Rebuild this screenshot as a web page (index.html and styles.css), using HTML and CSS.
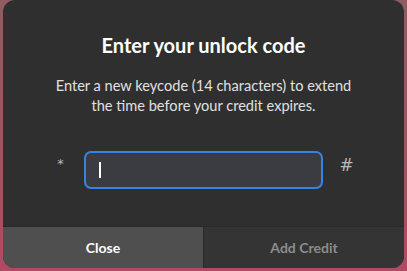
FILE: index.html
```html
<!DOCTYPE html>
<html lang="en">
<head>
    <meta charset="UTF-8">
    <meta name="viewport" content="width=device-width, initial-scale=1.0">
    <title>Enter your unlock code</title>
    <link rel="stylesheet" href="styles.css">
</head>
<body>
    <div class="dialog">
        <div class="content">
            <h1>Enter your unlock code</h1>
            <p class="message">Enter a new keycode (14 characters) to extend the time before your credit expires.</p>

            <div class="code-row">
                <span class="key key-star">*</span>
                <div class="code-input">
                    <span class="caret"></span>
                </div>
                <span class="key key-hash">#</span>
            </div>
        </div>

        <div class="buttons">
            <button class="btn btn-close">Close</button>
            <button class="btn btn-add" disabled>Add Credit</button>
        </div>
    </div>
</body>
</html>
```

FILE: styles.css
```css
html, body {
    height: 100%;
}
body {
    margin: 0;
    font-family: Lato, 'Open Sans', sans-serif;
    background: linear-gradient(180deg, #8e5c62 0%, #a0545e 70%, #b14a63 100%);
    overflow: hidden;
}
.dialog {
    margin: 0 3px;
    height: 268px;
    background-color: #2f2f2f;
    border-radius: 12px;
    overflow: hidden;
    display: flex;
    flex-direction: column;
    color: #ffffff;
}
.content {
    flex: 1;
    padding: 33px 45px 0;
    text-align: center;
}
h1 {
    margin: 0;
    font-size: 20px;
    font-weight: 700;
    line-height: 24px;
}
.message {
    margin: 19px 0 0;
    font-size: 14.6px;
    line-height: 20px;
    color: #e0e0e0;
}
.code-row {
    margin-top: 35px;
    display: flex;
    align-items: flex-start;
    justify-content: center;
}
.key {
    width: 20px;
    color: #b8b8b8;
    font-family: 'DejaVu Sans', sans-serif;
    text-align: center;
}
.key-star {
    font-size: 13px;
    line-height: 16px;
    margin-top: 5px;
    margin-right: 13px;
}
.key-hash {
    font-size: 17px;
    line-height: 20px;
    margin-top: 4px;
    margin-left: 14px;
}
.code-input {
    width: 239px;
    height: 38px;
    box-sizing: border-box;
    border: 2px solid #3584e4;
    border-radius: 7px;
    background-color: #3a3c41;
    display: flex;
    align-items: center;
    padding-left: 13px;
}
.caret {
    width: 2px;
    height: 16px;
    background-color: #ffffff;
}
.buttons {
    display: flex;
    height: 41px;
    border-top: 1px solid #292929;
}
.btn {
    flex: 1;
    border: none;
    margin: 0;
    font-family: Lato, 'Open Sans', sans-serif;
    font-size: 14px;
    font-weight: 700;
}
.btn-close {
    background-color: #4f4f4f;
    color: #ffffff;
    border-right: 1px solid #2a2a2a;
}
.btn-add {
    background-color: #343434;
    color: #8c8c8c;
}
```
